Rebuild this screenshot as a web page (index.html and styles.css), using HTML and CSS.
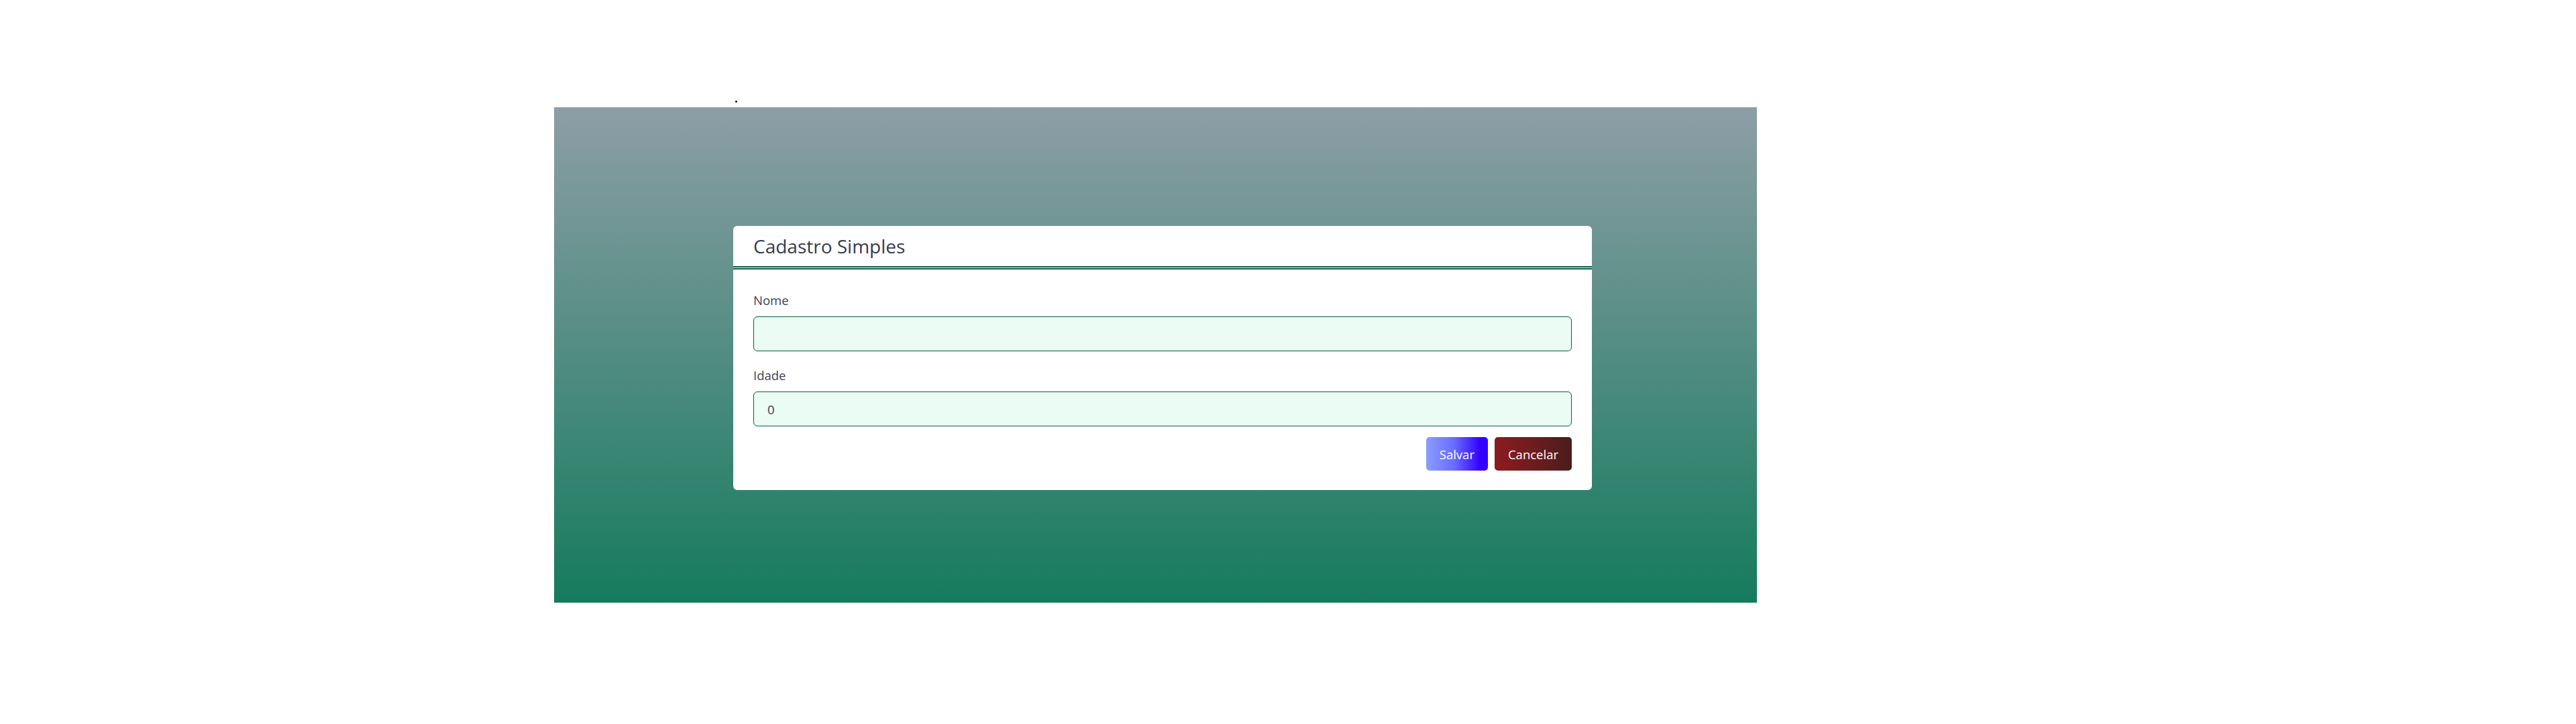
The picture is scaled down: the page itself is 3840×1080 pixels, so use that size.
FILE: index.html
```html
<!DOCTYPE html>
<html lang="pt-BR">
<head>
<meta charset="utf-8">
<title>Cadastro Simples</title>
<link rel="stylesheet" href="styles.css">
</head>
<body>
<div class="page">
  <div class="topbar"><span class="dot"></span></div>
  <section class="stage">
    <div class="card">
      <div class="card-header">
        <h1 class="card-title">Cadastro Simples</h1>
      </div>
      <form class="card-body">
        <label class="field-label" for="nome">Nome</label>
        <input class="field-input" id="nome" type="text" value="">
        <label class="field-label field-label-next" for="idade">Idade</label>
        <input class="field-input" id="idade" type="text" value="0">
        <div class="actions">
          <button type="button" class="btn btn-save">Salvar</button>
          <button type="button" class="btn btn-cancel">Cancelar</button>
        </div>
      </form>
    </div>
  </section>
</div>
</body>
</html>
```

FILE: styles.css
```css
* { box-sizing: border-box; }

html, body {
  margin: 0;
  padding: 0;
  background: #ffffff;
  font-family: "Open Sans", "Noto Sans", sans-serif;
}

.page {
  padding-left: 826px;
}

.topbar {
  height: 160px;
  display: flex;
  align-items: flex-end;
  padding-bottom: 7px;
  padding-left: 270px;
}

.dot {
  width: 3px;
  height: 3px;
  border-radius: 50%;
  background: #000;
  display: block;
}

.stage {
  width: 1793px;
  height: 739px;
  background: linear-gradient(to bottom, #8d9ea6 0%, #157b5d 100%);
  padding-top: 177px;
  padding-left: 267px;
}

.card {
  width: 1280px;
  background: #ffffff;
  border-radius: 6px;
}

.card-header {
  height: 65px;
  padding: 13px 30px 0 30px;
  border-bottom: 5px double #0b5c44;
}

.card-title {
  margin: 0;
  font-size: 28px;
  font-weight: 400;
  line-height: 34px;
  color: #363b50;
}

.card-body {
  display: flex;
  flex-direction: column;
  padding: 32px 30px 29px 30px;
  margin: 0;
}

.field-label {
  font-size: 18.5px;
  line-height: 28px;
  color: #3d4257;
  margin-bottom: 10px;
}

.field-label-next {
  margin-top: 22px;
}

.field-input {
  height: 52px;
  width: 100%;
  border: 1px solid #0b5c44;
  border-radius: 6px;
  background: #eafcf3;
  padding: 0 20px;
  font-family: "Open Sans", "Noto Sans", sans-serif;
  font-size: 18.5px;
  color: #363b50;
  outline: none;
}

.actions {
  display: flex;
  justify-content: flex-end;
  gap: 10px;
  margin-top: 16px;
}

.btn {
  height: 50px;
  padding: 0 20px;
  border: none;
  border-radius: 5px;
  color: #ffffff;
  font-family: "Open Sans", "Noto Sans", sans-serif;
  font-size: 18.5px;
  cursor: pointer;
}

.btn-save {
  background: linear-gradient(to right, #8a9dff 0%, #6a6cff 45%, #3300ff 88%, #3300ff 100%);
}

.btn-cancel {
  background: linear-gradient(to right, #8c1c1f 0%, #6e1c1f 50%, #4b1d1d 100%);
}
```
